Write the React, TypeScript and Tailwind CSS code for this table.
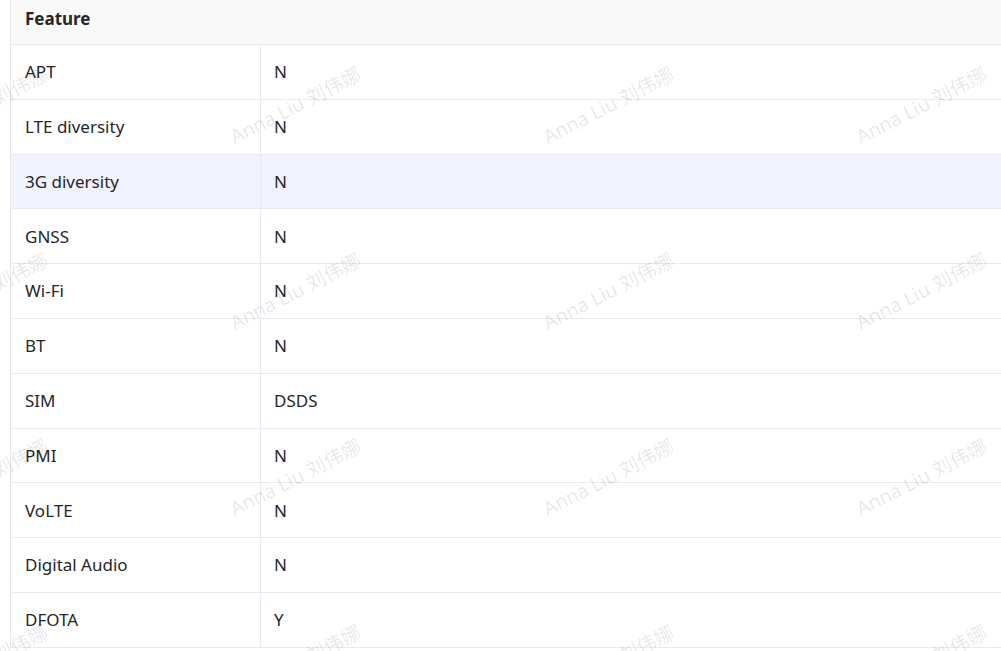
import React from "react";

const rows: [string, string][] = [
  ["APT", "N"],
  ["LTE diversity", "N"],
  ["3G diversity", "N"],
  ["GNSS", "N"],
  ["Wi-Fi", "N"],
  ["BT", "N"],
  ["SIM", "DSDS"],
  ["PMI", "N"],
  ["VoLTE", "N"],
  ["Digital Audio", "N"],
  ["DFOTA", "Y"],
];

const marks: [number, number][] = [];
for (let r = 0; r < 4; r++) {
  for (let c = -1; c < 3; c++) {
    marks.push([236 + c * 313, 127 + r * 186]);
  }
}

export default function App() {
  return (
    <div
      className="relative w-[1001px] h-[651px] overflow-hidden bg-white"
      style={{ fontFamily: '"Noto Sans", sans-serif' }}
    >
      <div className="ml-[10px] border-l border-[#e3e6ee] text-[17px] text-[#262626]">
        <div className="h-[45px] bg-[#f9f9f9] border-b border-[#e8e8ec] flex items-center pl-[14px] font-bold pb-[6px]">
          Feature
        </div>
        {rows.map(([k, v], i) => (
          <div
            key={k}
            className={`h-[54.8px] flex border-b border-[#e8eaf2] ${i === 2 ? "bg-[#f0f3fd]" : "bg-white"}`}
          >
            <div className="w-[250px] border-r border-[#e8eaf2] pl-[14px] flex items-center">{k}</div>
            <div className="flex-1 pl-[13px] flex items-center">{v}</div>
          </div>
        ))}
      </div>
      <div className="pointer-events-none absolute inset-0">
        {marks.map(([x, y], i) => (
          <div
            key={i}
            className="absolute whitespace-nowrap text-[19.5px] leading-none text-[rgba(0,0,0,0.1)] origin-bottom-left"
            style={{
              left: x,
              top: y,
              transform: "rotate(-27deg)",
              fontFamily: '"Noto Sans", "Noto Sans CJK SC", sans-serif',
            }}
          >
            Anna Liu 刘伟娜
          </div>
        ))}
      </div>
    </div>
  );
}
